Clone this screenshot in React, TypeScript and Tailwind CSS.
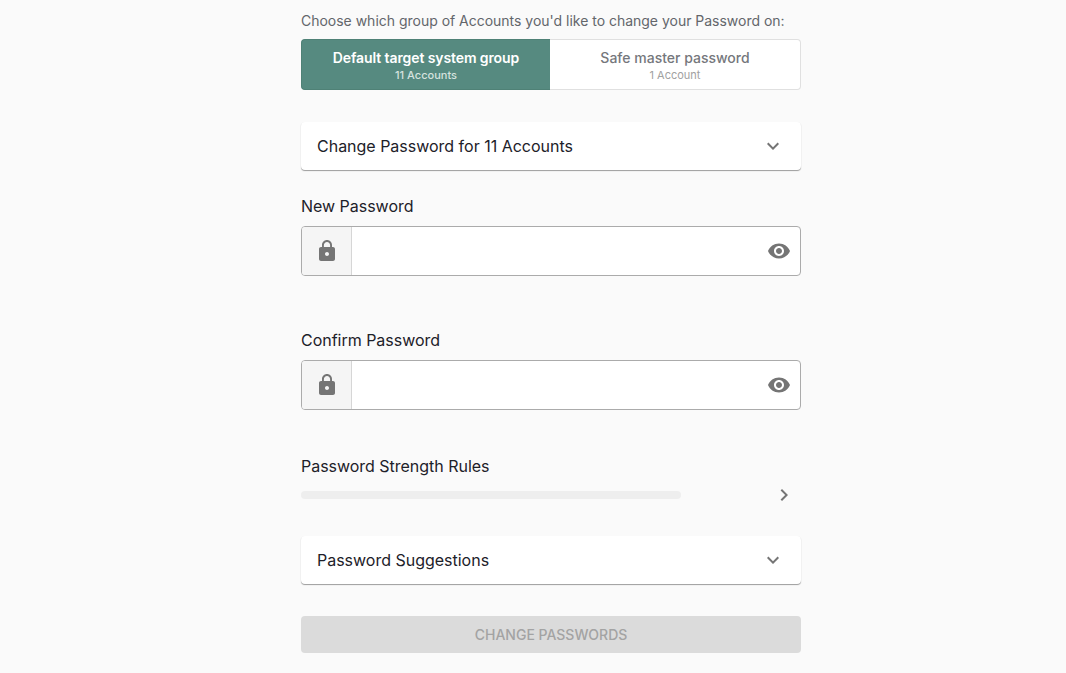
const lockPath =
  'M18 8h-1V6c0-2.76-2.24-5-5-5S7 3.24 7 6v2H6c-1.1 0-2 .9-2 2v10c0 1.1.9 2 2 2h12c1.1 0 2-.9 2-2V10c0-1.1-.9-2-2-2zm-6 9c-1.1 0-2-.9-2-2s.9-2 2-2 2 .9 2 2-.9 2-2 2zm3.1-9H8.9V6c0-1.71 1.39-3.1 3.1-3.1 1.71 0 3.1 1.39 3.1 3.1v2z';
const eyePath =
  'M12 4.5C7 4.5 2.73 7.61 1 12c1.73 4.39 6 7.5 11 7.5s9.27-3.11 11-7.5c-1.73-4.39-6-7.5-11-7.5zM12 17c-2.76 0-5-2.24-5-5s2.24-5 5-5 5 2.24 5 5-2.24 5-5 5zm0-8c-1.66 0-3 1.34-3 3s1.34 3 3 3 3-1.34 3-3-1.34-3-3-3z';
const expandPath = 'M16.59 8.59L12 13.17 7.41 8.59 6 10l6 6 6-6z';
const chevronPath = 'M10 6L8.59 7.41 13.17 12l-4.58 4.59L10 18l6-6z';

function Icon({ d }: { d: string }) {
  return (
    <svg viewBox="0 0 24 24" className="h-6 w-6 shrink-0 fill-[#757575]">
      <path d={d} />
    </svg>
  );
}

function Accordion({ title, className }: { title: string; className: string }) {
  return (
    <div
      className={`flex h-12 items-center justify-between rounded-[4px] bg-white pl-4 pr-4 shadow-[0_1px_1px_rgba(0,0,0,0.38),0_0_1px_rgba(0,0,0,0.03)] ${className}`}
    >
      <span className="text-base leading-6 tracking-[-0.01px] text-[#1d2129]">{title}</span>
      <Icon d={expandPath} />
    </div>
  );
}

function PasswordField({ label, className }: { label: string; className: string }) {
  return (
    <div className={className}>
      <div className="h-6 text-base leading-6 tracking-[-0.02px] text-[#1d2129]">{label}</div>
      <div className="mt-2 flex h-[50px] overflow-hidden rounded-[4px] border border-[#ababab] bg-white">
        <div className="flex w-[50px] items-center justify-center border-r border-[#d6d6d6] bg-[#f5f5f5]">
          <Icon d={lockPath} />
        </div>
        <input type="password" className="min-w-0 flex-1 bg-transparent outline-none" />
        <div className="flex w-[33px] items-center justify-start">
          <Icon d={eyePath} />
        </div>
      </div>
    </div>
  );
}

export default function App() {
  return (
    <div className="h-[673px] overflow-hidden bg-[#fafafa] font-['Inter',sans-serif]">
      <div className="ml-[301px] w-[500px] pt-[11px]">
        <p className="h-5 text-sm leading-5 tracking-[-0.015px] text-[#63666b]">
          Choose which group of Accounts you'd like to change your Password on:
        </p>

        <div className="mt-2 flex h-[51px]">
          <button
            type="button"
            className="flex w-[249px] flex-col items-center justify-center rounded-l-[4px] border border-r-0 border-[#4f8176] bg-[#568a80] pt-[3px]"
          >
            <span className="text-sm font-semibold leading-[18px] tracking-[-0.1px] text-white">
              Default target system group
            </span>
            <span className="text-[11px] font-medium leading-4 text-[#d5e2df]">11 Accounts</span>
          </button>
          <button
            type="button"
            className="flex flex-1 flex-col items-center justify-center rounded-r-[4px] border border-l-0 border-[#e0e0e0] bg-white pt-[3px]"
          >
            <span className="text-sm font-medium leading-[18px] text-[#75777c]">Safe master password</span>
            <span className="text-[11px] leading-4 text-[#a1a1a1]">1 Account</span>
          </button>
        </div>

        <Accordion title="Change Password for 11 Accounts" className="mt-8" />

        <PasswordField label="New Password" className="mt-6" />
        <PasswordField label="Confirm Password" className="mt-[52px]" />

        <div className="mt-11 h-6 text-base leading-6 tracking-[-0.02px] text-[#1d2129]">Password Strength Rules</div>
        <div className="mt-[5px] flex h-6 items-center justify-between">
          <div className="h-2 w-[380px] rounded-full bg-[#eeeeee]" />
          <div className="mr-[5px]">
            <Icon d={chevronPath} />
          </div>
        </div>

        <Accordion title="Password Suggestions" className="mt-[29px]" />

        <button
          type="button"
          className="mt-8 h-[37px] w-full rounded-[4px] bg-[#dbdbdb] text-sm font-medium text-[#a3a3a3]"
        >
          CHANGE PASSWORDS
        </button>
      </div>
    </div>
  );
}
